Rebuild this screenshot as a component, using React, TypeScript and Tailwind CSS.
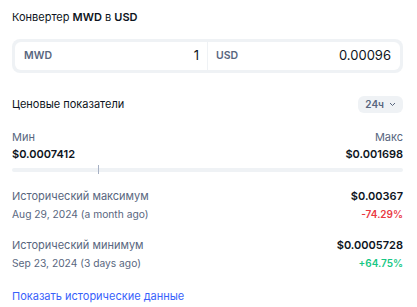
import React from "react";

export default function App() {
  return (
    <div className="w-[417px] h-[307px] bg-white pl-3 pr-[14px] text-[#0d1421] overflow-hidden" style={{ fontFamily: "Inter, 'Noto Sans', sans-serif" }}>
      <div className="pt-[8px] h-[18px] box-content text-[11px] leading-[18px]">
        Конвертер <span className="font-semibold">MWD</span> в <span className="font-semibold">USD</span>
      </div>
      <div className="mt-[13px] h-[34px] rounded-[8px] bg-[#eff2f5] p-[3px] flex">
        <div className="flex-1 flex items-center bg-white rounded-l-[6px] pl-[9px] pr-[8px]">
          <span className="text-[10.5px] font-semibold text-[#58667e]">MWD</span>
          <span className="ml-auto text-[13px]">1</span>
        </div>
        <div className="w-px bg-[#eff2f5]" />
        <div className="flex-1 flex items-center bg-white rounded-r-[6px] pl-[8px] pr-[9px]">
          <span className="text-[10.5px] font-semibold text-[#58667e]">USD</span>
          <span className="ml-auto text-[13px]">0.00096</span>
        </div>
      </div>
      <div className="mt-[22px] flex items-center h-[18px]">
        <span className="text-[11px]">Ценовые показатели</span>
        <div className="ml-auto h-[17px] px-[7px] rounded-[6px] bg-[#eff2f5] flex items-center gap-[5px] text-[10px] font-semibold text-[#58667e]">
          24ч
          <svg width="7" height="5" viewBox="0 0 7 5" fill="none"><path d="M1 1l2.5 2.5L6 1" stroke="#58667e" strokeWidth="1" /></svg>
        </div>
      </div>
      <div className="mt-[16px] flex justify-between">
        <div>
          <div className="text-[11px] leading-[16px] text-[#58667e]">Мин</div>
          <div className="text-[11px] leading-[18px] font-semibold">$0.0007412</div>
        </div>
        <div className="text-right">
          <div className="text-[11px] leading-[16px] text-[#58667e]">Макс</div>
          <div className="text-[11px] leading-[18px] font-semibold">$0.001698</div>
        </div>
      </div>
      <div className="mt-[5px] relative h-[4px] rounded-full bg-[#eff2f5]">
        <div className="absolute left-[86px] top-[-3px] w-px h-[9px] bg-[#a6b0c3]" />
      </div>
      <div className="mt-[15px] flex justify-between items-start">
        <div>
          <div className="text-[11px] leading-[18px] text-[#58667e]">Исторический максимум</div>
          <div className="text-[10.25px] leading-[18px] text-[#58667e]">Aug 29, 2024 (a month ago)</div>
        </div>
        <div className="text-right">
          <div className="text-[11px] leading-[18px] font-semibold">$0.00367</div>
          <div className="text-[10px] leading-[18px] font-semibold text-[#ea3943]">-74.29%</div>
        </div>
      </div>
      <div className="mt-[13px] flex justify-between items-start">
        <div>
          <div className="text-[11px] leading-[18px] text-[#58667e]">Исторический минимум</div>
          <div className="text-[10.25px] leading-[18px] text-[#58667e]">Sep 23, 2024 (3 days ago)</div>
        </div>
        <div className="text-right">
          <div className="text-[11px] leading-[18px] font-semibold">$0.0005728</div>
          <div className="text-[10px] leading-[18px] font-semibold text-[#16c784]">+64.75%</div>
        </div>
      </div>
      <div className="mt-[15px] text-[11px] leading-[18px] text-[#3861fb]">Показать исторические данные</div>
    </div>
  );
}
